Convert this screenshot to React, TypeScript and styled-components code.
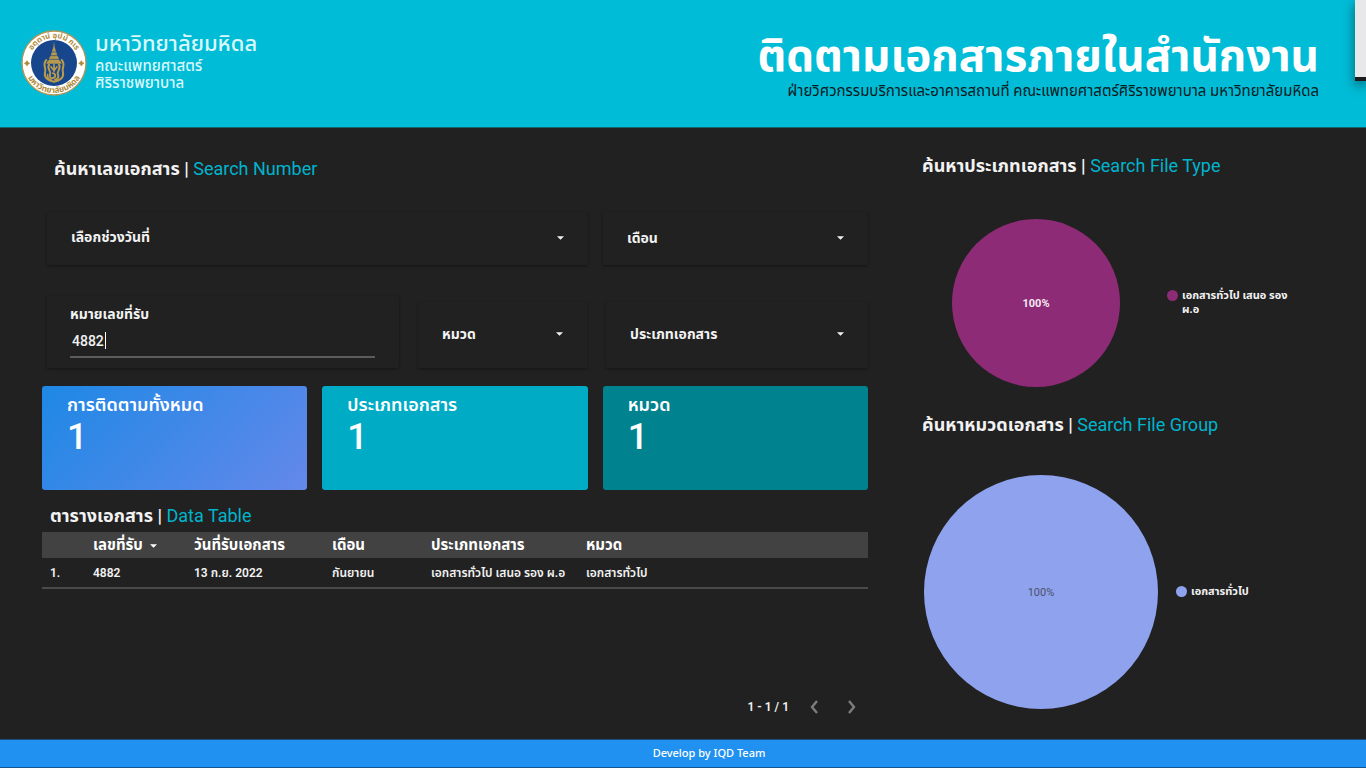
import React from "react";
import styled, { createGlobalStyle } from "styled-components";

const thaiStack = `Roboto, "Noto Sans Thai", "Noto Sans", sans-serif`;

const GlobalStyle = createGlobalStyle`
  *, *::before, *::after { box-sizing: border-box; }
  body { margin: 0; background: #212121; }
  button, input, select { font: inherit; color: inherit; }
  h1, h2, p { margin: 0; }
`;

const Page = styled.div`
  position: relative;
  display: grid;
  grid-template-rows: auto 1fr auto;
  min-height: 100vh;
  overflow: hidden;
  background: #212121;
  color: #f2f2f2;
  font-family: ${thaiStack};
  font-size: 13px;
`;

const Header = styled.header`
  display: flex;
  justify-content: space-between;
  align-items: flex-start;
  padding: 30px 47px 24px 21px;
  min-height: 128px;
  background: #00bcd7;
  border-bottom: 1px solid #16626d;
`;

const Brand = styled.a`
  display: flex;
  gap: 8px;
  color: #d9f8fc;
  text-decoration: none;
`;

const BrandText = styled.span`
  display: flex;
  flex-direction: column;
  font-weight: 500;
`;

const BrandName = styled.span`
  font-size: 22px;
  line-height: 28px;
`;

const BrandFaculty = styled.span`
  font-size: 15px;
  line-height: 17px;
`;

const HeaderText = styled.div`
  text-align: right;
`;

const PageTitle = styled.h1`
  color: #fff;
  font-size: 44px;
  line-height: 52px;
  font-weight: 700;
`;

const PageSubtitle = styled.p`
  color: #0b1a1d;
  font-size: 15px;
  line-height: 18px;
`;

const SidePanel = styled.div`
  position: absolute;
  top: 0;
  right: 0;
  width: 11px;
  height: 81px;
  background: #e8e8ea;
  border-bottom: 4px solid #1c1c1e;
  box-shadow: 0 4px 12px rgba(0, 0, 0, 0.5);
`;

const Main = styled.main`
  display: grid;
  grid-template-columns: minmax(0, 826fr) minmax(0, 444fr);
  column-gap: 54px;
  padding-left: 42px;
`;

const Column = styled.div`
  display: flex;
  flex-direction: column;
`;

const SectionTitle = styled.h2<{ $top: number; $indent?: number }>`
  margin-top: ${(p) => p.$top}px;
  padding-left: ${(p) => p.$indent ?? 0}px;
  font-size: 18px;
  line-height: 24px;
  font-weight: 700;
  white-space: nowrap;
`;

const Accent = styled.span`
  color: #00b4cc;
  font-weight: 400;
`;

const FilterRow = styled.div<{ $columns: string; $gap: number; $top: number }>`
  display: grid;
  grid-template-columns: ${(p) => p.$columns};
  column-gap: ${(p) => p.$gap}px;
  align-items: end;
  margin-top: ${(p) => p.$top}px;
  padding-left: 5px;
`;

const Card = styled.div<{ $height: number }>`
  position: relative;
  height: ${(p) => p.$height}px;
  border-radius: 2px;
  box-shadow: 0 1px 3px rgba(0, 0, 0, 0.4);
  font-size: 14px;
  font-weight: 700;
`;

const FilterSelect = styled.select`
  display: block;
  appearance: none;
  width: 100%;
  height: 100%;
  padding: 0 48px 2px 24px;
  border: 0;
  background: transparent;
`;

const FilterButton = styled.button`
  display: block;
  width: 100%;
  height: 100%;
  padding: 0 24px 2px;
  border: 0;
  background: transparent;
  text-align: left;
`;

const SelectArrow = styled.svg`
  position: absolute;
  right: 24px;
  top: 50%;
  width: 7px;
  height: 4px;
  margin-top: -3px;
  fill: #f2f2f2;
  pointer-events: none;
`;

const InputCard = styled(Card)`
  display: flex;
  flex-direction: column;
  padding: 8px 24px 10px 23px;
`;

const FieldLabel = styled.label`
  line-height: 20px;
`;

const Field = styled.div`
  position: relative;
  border-bottom: 2px solid #5c5c5c;
`;

const TextInput = styled.input`
  display: block;
  width: 100%;
  height: 32px;
  padding: 2px 2px 0;
  border: 0;
  outline: 0;
  background: transparent;
  font-weight: 500;
`;

const Caret = styled.span`
  position: absolute;
  left: 35px;
  top: 8px;
  width: 1px;
  height: 17px;
  background: #fff;
`;

const Stats = styled.div`
  display: grid;
  grid-template-columns: repeat(3, minmax(0, 1fr));
  column-gap: 15px;
  margin-top: 18px;
`;

const Stat = styled.div<{ $fill: string }>`
  height: 104px;
  padding: 6px 25px;
  border-radius: 3px;
  background: ${(p) => p.$fill};
  color: #fff;
`;

const StatLabel = styled.div`
  font-size: 18px;
  line-height: 26px;
  font-weight: 600;
`;

const StatValue = styled.div`
  font-size: 36px;
  line-height: 38px;
  font-weight: 500;
`;

const DataTable = styled.table`
  width: 100%;
  margin-top: 4px;
  border-collapse: collapse;
  table-layout: fixed;
  text-align: left;
  white-space: nowrap;
`;

const HeadCell = styled.th`
  height: 26px;
  padding: 0 0 0 8px;
  background: #424242;
  color: #fff;
  font-size: 15px;
  line-height: 20px;
  font-weight: 700;
`;

const Cell = styled.td`
  height: 30px;
  padding: 0 0 0 8px;
  border-bottom: 2px solid #4a4a4a;
  font-size: 12px;
  font-weight: 600;
`;

const SortArrow = styled.svg`
  width: 7px;
  height: 4px;
  margin-left: 7px;
  vertical-align: middle;
  fill: #fff;
`;

const Pager = styled.nav`
  display: flex;
  justify-content: flex-end;
  align-items: center;
  gap: 13px;
  margin-top: auto;
  padding: 0 5px 20px 0;
  font-size: 12px;
  font-weight: 600;
`;

const PagerButton = styled.button`
  display: grid;
  place-items: center;
  width: 24px;
  height: 24px;
  padding: 0;
  border: 0;
  background: transparent;
`;

const Chart = styled.div<{ $top: number; $indent: number; $gap: number }>`
  display: flex;
  align-items: center;
  gap: ${(p) => p.$gap}px;
  margin-top: ${(p) => p.$top}px;
  padding-left: ${(p) => p.$indent}px;
`;

const PieLabel = styled.text`
  font-size: 11px;
  text-anchor: middle;
`;

const Legend = styled.div`
  display: flex;
  gap: 4px;
  width: 126px;
  font-size: 11px;
  line-height: 14px;
  font-weight: 700;
`;

const Dot = styled.span<{ $color: string }>`
  flex: none;
  width: 11px;
  height: 11px;
  margin-top: 1px;
  border-radius: 50%;
  background: ${(p) => p.$color};
`;

const Footer = styled.footer`
  height: 29px;
  padding-left: 52px;
  border-top: 1px solid #1b4f7d;
  border-bottom: 1px solid #14558f;
  background: #2091f1;
  color: #fff;
  font-family: "Noto Sans", sans-serif;
  font-size: 11px;
  line-height: 26px;
  font-weight: 500;
  text-align: center;
`;

function Arrow() {
  return (
    <SelectArrow viewBox="0 0 8 4" aria-hidden="true">
      <path d="M0 0h8L4 4z" />
    </SelectArrow>
  );
}

function Seal() {
  return (
    <svg width="66" height="66" viewBox="0 0 198 198" aria-hidden="true">
      <defs>
        <path id="sealTop" d="M24 99a75 75 0 0 1 150 0" />
        <path id="sealBottom" d="M9 99a90 90 0 0 0 180 0" />
      </defs>
      <circle cx="99" cy="99" r="96" fill="#fff" stroke="#b59555" strokeWidth="4" />
      <circle cx="99" cy="99" r="69" fill="#17468d" />
      <g fill="#b08a3a" fontWeight="700" textAnchor="middle">
        <text fontSize="23"><textPath href="#sealTop" startOffset="50%">อตฺตานํ  อุปมํ  กเร</textPath></text>
        <text fontSize="25"><textPath href="#sealBottom" startOffset="50%">มหาวิทยาลัยมหิดล</textPath></text>
      </g>
      <path d="M18 92l3 5 5 3-5 3-3 5-3-5-5-3 5-3zM181 92l3 5 5 3-5 3-3 5-3-5-5-3 5-3z" fill="#b08a3a" stroke="#b08a3a" strokeWidth="2" />
      <g fill="#b89a4c">
        <path d="M99 34l2 18 4 12 3 10 5 10 4 12H81l4-12 5-10 3-10 4-12z" />
        <path d="M79 94h40l3 7H76z" />
      </g>
      <g fill="none" stroke="#b89a4c" strokeWidth="6" strokeLinecap="round">
        <path d="M76 90c-14 14 2 24-4 38-3 16 10 24 27 27 17-3 30-11 27-27-6-14 10-24-4-38" />
        <path d="M84 104c-8 12 8 18 3 30-3 8 4 14 12 9 7-6 3-13-3-13M114 104c8 12-8 18-3 30 3 8-1 14-9 15" />
        <path d="M99 104v20M90 110l9 12 9-12M80 134c-2 10 4 15 10 15" strokeWidth="5" />
      </g>
      <path d="M87 77h24M83 88h32M92 66h14" stroke="#17468d" strokeWidth="2" />
    </svg>
  );
}

type PieProps = { size: number; fill: string; ink: string; weight: number; label: string };

function Pie({ size, fill, ink, weight, label }: PieProps) {
  const c = size / 2;
  return (
    <svg width={size} height={size} role="img" aria-label={label}>
      <circle cx={c} cy={c} r={c} fill={fill} />
      <PieLabel x={c} y={c + 4} fill={ink} fontWeight={weight}>100%</PieLabel>
    </svg>
  );
}

const stats = [
  { label: "การติดตามทั้งหมด", fill: "linear-gradient(135deg, #1e88e5, #6488ea)" },
  { label: "ประเภทเอกสาร", fill: "#00acc5" },
  { label: "หมวด", fill: "#00838f" },
];

export default function App() {
  return (
    <Page>
      <GlobalStyle />
      <Header>
        <Brand href="#">
          <Seal />
          <BrandText>
            <BrandName>มหาวิทยาลัยมหิดล</BrandName>
            <BrandFaculty>คณะแพทยศาสตร์</BrandFaculty>
            <BrandFaculty>ศิริราชพยาบาล</BrandFaculty>
          </BrandText>
        </Brand>
        <HeaderText>
          <PageTitle>ติดตามเอกสารภายในสำนักงาน</PageTitle>
          <PageSubtitle>
            ฝ่ายวิศวกรรมบริการและอาคารสถานที่ คณะแพทยศาสตร์ศิริราชพยาบาล มหาวิทยาลัยมหิดล
          </PageSubtitle>
        </HeaderText>
      </Header>
      <SidePanel />

      <Main>
        <Column>
          <SectionTitle $top={29} $indent={12}>
            ค้นหาเลขเอกสาร | <Accent>Search Number</Accent>
          </SectionTitle>
          <FilterRow $columns="minmax(0, 541fr) minmax(0, 265fr)" $gap={15} $top={31}>
            <Card $height={53}>
              <FilterButton type="button">เลือกช่วงวันที่</FilterButton>
              <Arrow />
            </Card>
            <Card $height={53}>
              <FilterSelect aria-label="เดือน"><option>เดือน</option></FilterSelect>
              <Arrow />
            </Card>
          </FilterRow>
          <FilterRow $columns="minmax(0, 352fr) minmax(0, 169fr) minmax(0, 262fr)" $gap={19} $top={31}>
            <InputCard $height={72}>
              <FieldLabel htmlFor="receive-number">หมายเลขที่รับ</FieldLabel>
              <Field>
                <TextInput id="receive-number" type="text" defaultValue="4882" />
                <Caret />
              </Field>
            </InputCard>
            <Card $height={66}>
              <FilterSelect aria-label="หมวด"><option>หมวด</option></FilterSelect>
              <Arrow />
            </Card>
            <Card $height={66}>
              <FilterSelect aria-label="ประเภทเอกสาร"><option>ประเภทเอกสาร</option></FilterSelect>
              <Arrow />
            </Card>
          </FilterRow>
          <Stats>
            {stats.map((s) => (
              <Stat key={s.label} $fill={s.fill}>
                <StatLabel>{s.label}</StatLabel>
                <StatValue>1</StatValue>
              </Stat>
            ))}
          </Stats>
          <SectionTitle $top={14} $indent={8}>
            ตารางเอกสาร | <Accent>Data Table</Accent>
          </SectionTitle>
          <DataTable>
            <colgroup>
              <col width="43" />
              <col width="101" />
              <col width="138" />
              <col width="99" />
              <col width="155" />
              <col />
            </colgroup>
            <thead>
              <tr>
                <HeadCell aria-label="ลำดับ" />
                <HeadCell>
                  เลขที่รับ
                  <SortArrow viewBox="0 0 8 4" aria-hidden="true"><path d="M0 0h8L4 4z" /></SortArrow>
                </HeadCell>
                <HeadCell>วันที่รับเอกสาร</HeadCell>
                <HeadCell>เดือน</HeadCell>
                <HeadCell>ประเภทเอกสาร</HeadCell>
                <HeadCell>หมวด</HeadCell>
              </tr>
            </thead>
            <tbody>
              <tr>
                <Cell>1.</Cell>
                <Cell>4882</Cell>
                <Cell>13 ก.ย. 2022</Cell>
                <Cell>กันยายน</Cell>
                <Cell>เอกสารทั่วไป เสนอ รอง ผ.อ</Cell>
                <Cell>เอกสารทั่วไป</Cell>
              </tr>
            </tbody>
          </DataTable>
          <Pager aria-label="หน้า">
            <span>1 - 1 / 1</span>
            <PagerButton type="button" aria-label="ก่อนหน้า">
              <svg width="9" height="14" viewBox="0 0 9 14" fill="none" stroke="#7d7d7d" strokeWidth="2.4"><path d="M7 1L2 7l5 6" /></svg>
            </PagerButton>
            <PagerButton type="button" aria-label="ถัดไป">
              <svg width="9" height="14" viewBox="0 0 9 14" fill="none" stroke="#7d7d7d" strokeWidth="2.4"><path d="M2 1l5 6-5 6" /></svg>
            </PagerButton>
          </Pager>
        </Column>

        <Column>
          <SectionTitle $top={26}>
            ค้นหาประเภทเอกสาร | <Accent>Search File Type</Accent>
          </SectionTitle>
          <Chart $top={41} $indent={30} $gap={47}>
            <Pie size={168} fill="#8e2b77" ink="#f4e9f2" weight={700} label="เอกสารทั่วไป เสนอ รอง ผ.อ" />
            <Legend>
              <Dot $color="#8e2b77" />
              <span>เอกสารทั่วไป เสนอ รอง ผ.อ</span>
            </Legend>
          </Chart>
          <SectionTitle $top={26}>
            ค้นหาหมวดเอกสาร | <Accent>Search File Group</Accent>
          </SectionTitle>
          <Chart $top={38} $indent={2} $gap={18}>
            <Pie size={234} fill="#8fa2ee" ink="#4b5168" weight={400} label="เอกสารทั่วไป" />
            <Legend>
              <Dot $color="#8fa2ee" />
              <span>เอกสารทั่วไป</span>
            </Legend>
          </Chart>
        </Column>
      </Main>

      <Footer>Develop by IQD Team</Footer>
    </Page>
  );
}
